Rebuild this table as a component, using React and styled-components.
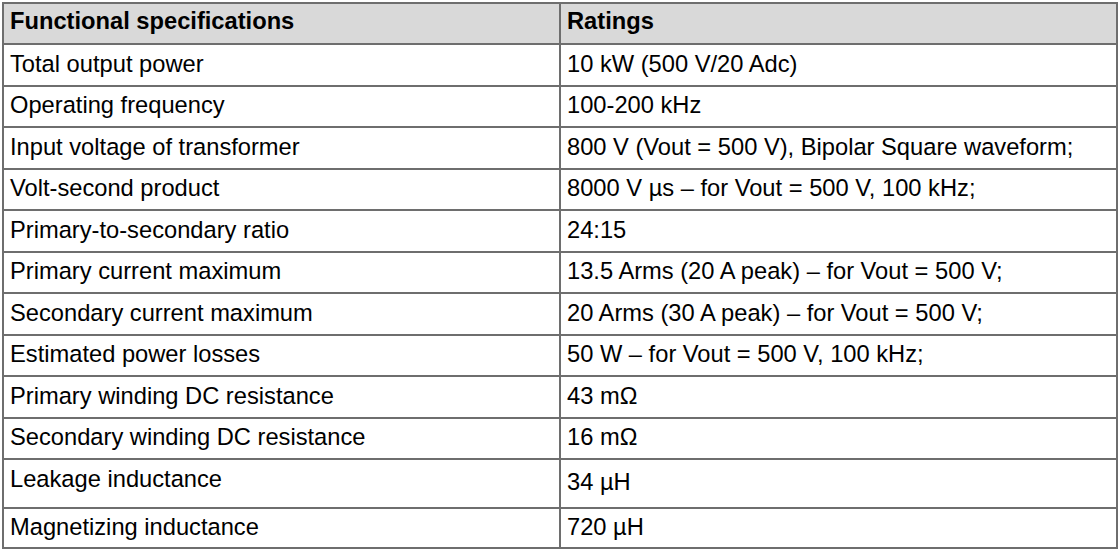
import styled, { createGlobalStyle } from "styled-components";

const GlobalStyle = createGlobalStyle`
  html, body {
    margin: 0;
    padding: 0;
    background: #ffffff;
  }
  body {
    font-family: "Liberation Sans", Arial, sans-serif;
    color: #000000;
  }
`;

// name, rating, row height, bottom padding for name, bottom padding for rating
const specs = [
  ["Total output power", "10 kW (500 V/20 Adc)", 42],
  ["Operating frequency", "100-200 kHz", 41],
  ["Input voltage of transformer", "800 V (Vout = 500 V), Bipolar Square waveform;", 42],
  ["Volt-second product", "8000 V µs – for Vout = 500 V, 100 kHz;", 41],
  ["Primary-to-secondary ratio", "24:15", 42],
  ["Primary current maximum", "13.5 Arms (20 A peak) – for Vout = 500 V;", 41],
  ["Secondary current maximum", "20 Arms (30 A peak) – for Vout = 500 V;", 42],
  ["Estimated power losses", "50 W – for Vout = 500 V, 100 kHz;", 41],
  ["Primary winding DC resistance", "43 mΩ", 42],
  ["Secondary winding DC resistance", "16 mΩ", 41],
  ["Leakage inductance", "34 µH", 49, 9, 3],
  ["Magnetizing inductance", "720 µH", 40],
];

function App() {
  return (
    <>
      <GlobalStyle />
      <Table>
        <Row $height={39} $head>
          <Cell $pad={4}>Functional specifications</Cell>
          <Cell $pad={4}>Ratings</Cell>
        </Row>
        {specs.map(([name, value, height, pad, valuePad]) => (
          <Row key={name} $height={height}>
            <Cell $pad={pad}>{name}</Cell>
            <Cell $pad={valuePad ?? pad}>{value}</Cell>
          </Row>
        ))}
      </Table>
    </>
  );
}

export default App;

const Table = styled.div`
  margin: 2px 0 0 2px;
  width: 1116px;
  border: 2px solid #6e6e6e;
  box-sizing: border-box;
  display: flex;
  flex-direction: column;
`;

const Row = styled.div`
  display: grid;
  grid-template-columns: 555px 1fr;
  height: ${(p) => p.$height}px;
  box-sizing: border-box;
  background: ${(p) => (p.$head ? "#d9d9d9" : "#ffffff")};
  font-weight: ${(p) => (p.$head ? 700 : 400)};

  & + & {
    border-top: 2px solid #6e6e6e;
  }
`;

const Cell = styled.div`
  display: flex;
  align-items: center;
  padding: 0 6px ${(p) => p.$pad ?? 2}px 6px;
  font-size: 23.7px;
  white-space: nowrap;

  & + & {
    border-left: 2px solid #6e6e6e;
  }
`;
